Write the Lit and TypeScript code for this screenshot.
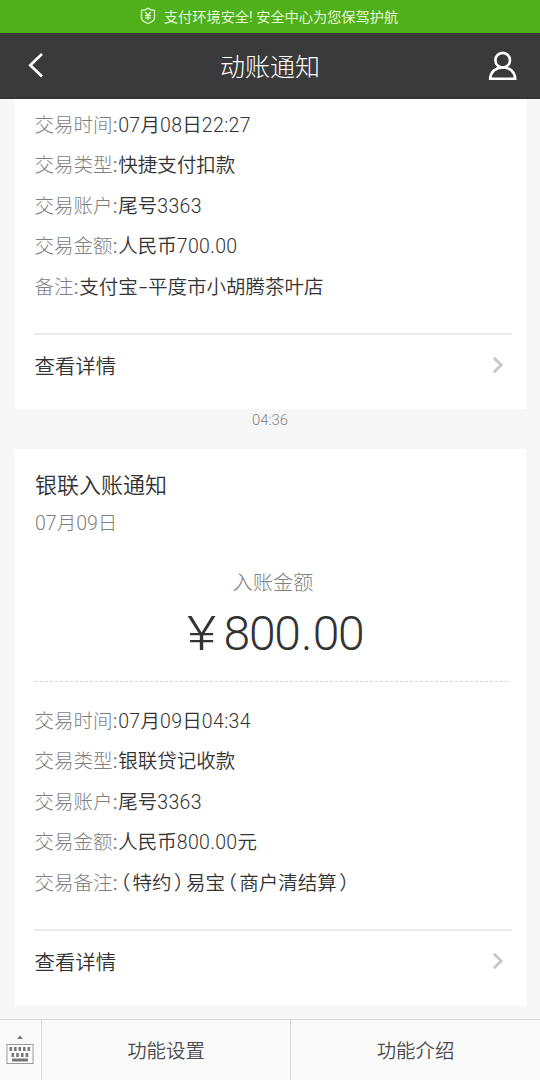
import { LitElement, html, css, svg } from "lit";
import { customElement, property } from "lit/decorators.js";

interface Entry {
  label: string;
  value: string;
}

const FONT = css`"Roboto", "Noto Sans CJK SC", sans-serif`;

const styledRuns = (text: string) =>
  text.split(/([（）]|-|[\d.:]+)/).map((part) => {
    if (part === "（" || part === "）") return html`<span class="bracket">${part}</span>`;
    if (part === "-") return html`<span class="dash">-</span>`;
    if (/^[\d.:]+$/.test(part)) return html`<span class="digits">${part}</span>`;
    return part;
  });

@customElement("entry-list")
class EntryList extends LitElement {
  @property({ attribute: false }) entries: Entry[] = [];

  static styles = css`
    :host { display: block; font-family: ${FONT}; }
    .row {
      display: flex;
      height: 40.45px;
      line-height: 40.45px;
      font-size: 19.5px;
      white-space: nowrap;
      margin-left: -0.4px;
    }
    .label { color: #7e7e7e; font-weight: 300; }
    .colon { display: inline-block; width: 5.6px; font-weight: 400; }
    .value { color: #333; font-weight: 350; }
    .digits { letter-spacing: 0.33px; }
    .dash { font-family: "Noto Sans CJK SC", sans-serif; line-height: 20px; display: inline-block; width: 10.2px; text-align: center; transform: translateY(-1.5px) scaleX(1.45); }
    .bracket { font-family: "Noto Sans CJK SC", sans-serif; line-height: 20px; font-feature-settings: "halt"; margin: 0 2.3px; }
  `;

  render() {
    return this.entries.map(
      (e) => html`<div class="row"><span class="label">${e.label}<span class="colon">:</span></span><span class="value">${styledRuns(e.value)}</span></div>`
    );
  }
}

@customElement("detail-link")
class DetailLink extends LitElement {
  static styles = css`
    :host {
      display: flex;
      align-items: center;
      justify-content: space-between;
      box-sizing: border-box;
      height: 76px;
      margin: 0 -1px 0 -1px;
      padding: 0 8px 14px 0.5px;
      border-top: 2px solid #ebebeb;
      font-family: ${FONT};
      font-size: 20.4px;
      font-weight: 350;
      color: #333;
    }
    .arrow { display: block; }
  `;

  render() {
    return html`<span>查看详情</span>
      <svg class="arrow" width="12" height="18" viewBox="0 0 12 18" fill="none" stroke="#c8c8c8" stroke-width="2.9">
        <path d="M1.8 1.8 9.2 9 1.8 16.2" />
      </svg>`;
  }
}

@customElement("app-root")
class AppRoot extends LitElement {
  static styles = css`
    :host {
      display: flex;
      flex-direction: column;
      height: 1080px;
      overflow: hidden;
      background: #f7f7f7;
      color: #333;
      font-family: ${FONT};
    }
    .notice {
      flex: none;
      box-sizing: border-box;
      height: 33px;
      padding: 0 2px 2px 0;
      display: flex;
      align-items: center;
      justify-content: center;
      gap: 8px;
      background: #4fb01a;
      color: #e4f6d8;
      font-size: 14.2px;
    }
    .header {
      flex: none;
      box-sizing: border-box;
      height: 66px;
      padding: 0 23px 0 28px;
      display: grid;
      grid-template-columns: 60px 1fr 60px;
      align-items: center;
      background: #3a3a3a;
      border-bottom: 2px solid #343434;
      color: #fff;
    }
    .title { text-align: center; font-size: 25px; font-weight: 300; padding-right: 5px; }
    .user { justify-self: end; margin-top: 2px; }
    .feed { flex: 1; min-height: 0; padding: 0 14px; }
    .card { box-sizing: border-box; background: #fff; padding: 0 15px 0 21px; }
    .first { height: 310px; padding-top: 7px; }
    .first entry-list { height: 227px; }
    .second { height: 556px; padding-top: 21px; }
    .second .list { height: 227px; padding-top: 20px; }
    .time {
      height: 40px;
      line-height: 22px;
      text-align: center;
      color: #808080;
      font-size: 14.8px;
      font-weight: 300;
    }
    .name { height: 32px; line-height: 32px; font-size: 22px; font-weight: 350; }
    .date { height: 44px; line-height: 44px; font-size: 19.5px; font-weight: 300; color: #808080; }
    .caption {
      height: 30px;
      line-height: 30px;
      margin-top: 22px;
      text-align: center;
      font-size: 20.2px;
      font-weight: 300;
      color: #808080;
    }
    .amount {
      display: flex;
      justify-content: center;
      height: 83px;
      line-height: 71px;
      font-size: 48px;
      font-weight: 300;
      letter-spacing: -1.3px;
      padding-left: 4px;
    }
    .yen { width: 37px; transform: scaleX(1.18); transform-origin: 0 50%; }
    .dot { padding: 0 1.5px; }
    .dashes { display: block; width: 476px; height: 1px; }
    .footer {
      flex: none;
      box-sizing: border-box;
      height: 61px;
      display: grid;
      grid-template-columns: 42px 249px 1fr;
      border-top: 1px solid #dcdcdc;
      background: #fafafa;
      color: #4c4c4c;
      font-size: 19.4px;
      font-weight: 350;
    }
    .cell {
      display: flex;
      align-items: center;
      justify-content: center;
      border-right: 1px solid #dcdcdc;
    }
    .cell:last-child { border-right: 0; }
    .tab { padding-bottom: 2px; }
    .keyboard { margin-right: 1px; }
  `;

  private first: Entry[] = [
    { label: "交易时间", value: "07月08日22:27" },
    { label: "交易类型", value: "快捷支付扣款" },
    { label: "交易账户", value: "尾号3363" },
    { label: "交易金额", value: "人民币700.00" },
    { label: "备注", value: "支付宝-平度市小胡腾茶叶店" },
  ];

  private second: Entry[] = [
    { label: "交易时间", value: "07月09日04:34" },
    { label: "交易类型", value: "银联贷记收款" },
    { label: "交易账户", value: "尾号3363" },
    { label: "交易金额", value: "人民币800.00元" },
    { label: "交易备注", value: "（特约）易宝（商户清结算）" },
  ];

  render() {
    const keys = [
      ...[3.5, 8, 12.5, 17, 21.5].map((x) => [x, 12]),
      ...[5.5, 10.2, 14.9, 19.6].map((x) => [x, 18]),
    ];
    return html`
      <div class="notice">
        <svg width="16" height="18" viewBox="0 0 16 18" fill="none" stroke="#e4f6d8" stroke-width="1.3">
          <path d="M8 1.2C6 2.7 3.8 3.3 1.5 3.4V11C1.5 13.2 4.5 15.2 8 16.5 11.5 15.2 14.5 13.2 14.5 11V3.4C12.2 3.3 10 2.7 8 1.2Z" />
          <path d="M5.3 5 8 8.2 10.7 5M8 8.2V13M5 8.6H11M5 10.9H11" />
        </svg>
        <span>支付环境安全! 安全中心为您保驾护航</span>
      </div>
      <div class="header">
        <svg width="17" height="26" viewBox="0 0 17 26" fill="none" stroke="#fff" stroke-width="2.7">
          <path d="M14 2 2.3 13.3 14 24.5" />
        </svg>
        <span class="title">动账通知</span>
        <svg class="user" width="29" height="30" viewBox="0 0 29 30" fill="none" stroke="#fff" stroke-width="2.6">
          <circle cx="14.7" cy="9.2" r="7.3" />
          <path d="M2.2 27.7C2.6 21 7.5 16.5 14.7 16.5S26.8 21 27.2 27.7Z" />
        </svg>
      </div>
      <div class="feed">
        <div class="card first">
          <entry-list .entries=${this.first}></entry-list>
          <detail-link></detail-link>
        </div>
        <div class="time">04:36</div>
        <div class="card second">
          <div class="name">银联入账通知</div>
          <div class="date">07月09日</div>
          <div class="caption">入账金额</div>
          <div class="amount"><span class="yen">¥</span><span>800<span class="dot">.</span>00</span></div>
          <svg class="dashes" viewBox="0 0 476 1"><path d="M0 .5H476" stroke="#d6d6d6" stroke-dasharray="3 2" /></svg>
          <div class="list"><entry-list .entries=${this.second}></entry-list></div>
          <detail-link></detail-link>
        </div>
      </div>
      <div class="footer">
        <div class="cell">
          <svg class="keyboard" width="28" height="30" viewBox="0 0 28 30">
            <path d="M11 4 14 .5 17 4Z" fill="#777" />
            <rect x="1" y="9.5" width="26" height="19" fill="#fff" stroke="#999" />
            ${keys.map(([x, y]) => svg`<rect x=${x} y=${y} width="2.6" height="4" fill="#777" />`)}
            <rect x="6" y="23.500" width="16" height="3" fill="#777" />
          </svg>
        </div>
        <div class="cell tab">功能设置</div>
        <div class="cell tab">功能介绍</div>
      </div>
    `;
  }
}
